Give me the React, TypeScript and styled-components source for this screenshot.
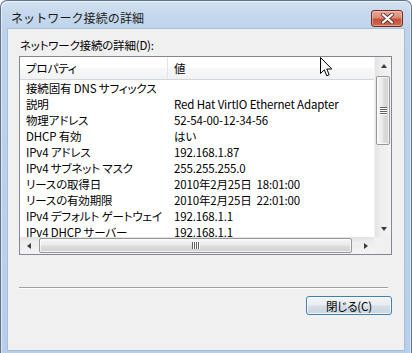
import React from "react";
import styled, { createGlobalStyle } from "styled-components";

const GlobalStyle = createGlobalStyle`
  html, body { margin: 0; padding: 0; background: #ffffff; }
  body { font-family: "Noto Sans CJK JP", "Noto Sans", sans-serif; }
  * { box-sizing: border-box; }
`;

const Window = styled.div`
  position: relative;
  width: 412px;
  height: 353px;
  border: 1px solid #5d7491;
  border-bottom: none;
  border-radius: 7px 7px 0 0;
  background: linear-gradient(180deg, #d3e1f1 0px, #c6d8ed 14px, #bdd3eb 30px, #b7cfea 100%);
  box-shadow: inset 1px 1px 0 rgba(255, 255, 255, 0.55), inset -1px 0 0 rgba(255, 255, 255, 0.45);
  display: flex;
  flex-direction: column;
  overflow: hidden;
`;

const TitleBar = styled.div`
  height: 28px;
  padding: 6px 8px 0 10px;
  display: flex;
  align-items: center;
  justify-content: space-between;
`;

const Title = styled.span`
  font-size: 12px;
  line-height: 16px;
  color: #1b1b1b;
  letter-spacing: 0.1px;
`;

const CloseButton = styled.div`
  width: 32px;
  height: 17px;
  border: 1px solid #6d2b21;
  border-radius: 3px;
  background: linear-gradient(180deg, #e9a899 0%, #dc8a77 45%, #c6503a 55%, #cf6a50 100%);
  box-shadow: inset 0 0 0 1px rgba(255, 220, 210, 0.45);
  display: flex;
  align-items: center;
  justify-content: center;
`;

const Client = styled.div`
  margin: 0 7px;
  height: 321px;
  background: #f0f0f0;
  box-shadow: 0 0 0 1px #a9bdd4;
  padding: 9px 12px 0 11px;
  display: flex;
  flex-direction: column;
`;

const Label = styled.div`
  font-size: 11.5px;
  letter-spacing: -0.2px;
  line-height: 14px;
  height: 14px;
  margin-left: 1px;
  color: #000;
  font-feature-settings: "palt";
`;

const ListBox = styled.div`
  margin-top: 4px;
  width: 373px;
  height: 199px;
  border: 1px solid #828790;
  background: #ffffff;
  display: grid;
  grid-template-columns: 354px 17px;
  grid-template-rows: 180px 17px;
`;

const Content = styled.div`
  overflow: hidden;
  font-size: 11.5px;
  letter-spacing: -0.15px;
  color: #000;
  font-feature-settings: "palt";
`;

const Header = styled.div`
  height: 23px;
  display: grid;
  grid-template-columns: 148px 206px;
  border-bottom: 1px solid #d5d5d5;
  background: linear-gradient(180deg, #ffffff 0%, #ffffff 45%, #f7f8f9 50%, #f1f2f4 100%);
`;

const HeaderCell = styled.div<{ $divider?: boolean }>`
  padding-left: 6px;
  line-height: 22px;
  border-right: ${(p) => (p.$divider ? "1px solid #e1e4e8" : "none")};
`;

const Row = styled.div`
  height: 16px;
  display: grid;
  grid-template-columns: 148px 206px;
  line-height: 16px;
  white-space: pre;
`;

const Cell = styled.div`
  padding-left: 6px;
  overflow: hidden;
`;

const VScroll = styled.div`
  display: flex;
  flex-direction: column;
  background: linear-gradient(90deg, #e2e2e2 0%, #ededed 30%, #f3f3f3 100%);
  border-left: 1px solid #f4f4f4;
`;

const HScroll = styled.div`
  display: flex;
  background: linear-gradient(180deg, #e2e2e2 0%, #ededed 30%, #f3f3f3 100%);
`;

const Corner = styled.div`
  background: #f0f0f0;
`;

const ArrowBox = styled.div`
  width: 17px;
  height: 17px;
  flex: none;
  display: flex;
  align-items: center;
  justify-content: center;
`;

const Tri = styled.span<{ $dir: "up" | "down" | "left" | "right" }>`
  width: 0;
  height: 0;
  border-style: solid;
  ${(p) =>
    p.$dir === "up"
      ? "border-width: 0 3.5px 4px 3.5px; border-color: transparent transparent #3c3c3c transparent;"
      : p.$dir === "down"
      ? "border-width: 4px 3.5px 0 3.5px; border-color: #3c3c3c transparent transparent transparent;"
      : p.$dir === "left"
      ? "border-width: 3.5px 4px 3.5px 0; border-color: transparent #3c3c3c transparent transparent;"
      : "border-width: 3.5px 0 3.5px 4px; border-color: transparent transparent transparent #3c3c3c;"}
`;

const VTrack = styled.div`
  flex: 1;
  padding: 2px 1px 0 1px;
`;

const HTrack = styled.div`
  flex: 1;
  padding: 1px 0 1px 2px;
`;

const VThumb = styled.div<{ $size: number }>`
  height: ${(p) => p.$size}px;
  border: 1px solid #979797;
  border-radius: 2px;
  background: linear-gradient(90deg, #f6f6f6 0%, #eaeaea 45%, #dcdcdc 55%, #d2d2d2 100%);
  box-shadow: inset 0 0 0 1px rgba(255, 255, 255, 0.7);
  display: flex;
  align-items: center;
  justify-content: center;
`;

const HThumb = styled.div<{ $size: number }>`
  width: ${(p) => p.$size}px;
  height: 15px;
  border: 1px solid #979797;
  border-radius: 2px;
  background: linear-gradient(180deg, #f6f6f6 0%, #eaeaea 45%, #dcdcdc 55%, #d2d2d2 100%);
  box-shadow: inset 0 0 0 1px rgba(255, 255, 255, 0.7);
  display: flex;
  align-items: center;
  justify-content: center;
`;

const VGrip = styled.span`
  width: 7px;
  height: 8px;
  background: repeating-linear-gradient(180deg, #5f5f5f 0 1px, #ffffff 1px 2px);
`;

const HGrip = styled.span`
  width: 8px;
  height: 7px;
  background: repeating-linear-gradient(90deg, #5f5f5f 0 1px, #ffffff 1px 2px);
`;

const Separator = styled.div`
  margin-top: 32px;
  width: 369px;
  height: 2px;
  border-top: 1px solid #a0a0a0;
  border-bottom: 1px solid #ffffff;
`;

const ButtonRow = styled.div`
  margin-top: 7px;
  display: flex;
  justify-content: flex-end;
`;

const PushButton = styled.button`
  width: 86px;
  height: 19px;
  padding: 0;
  border: 1px solid #3c7fb1;
  border-radius: 3px;
  background: linear-gradient(180deg, #f1f4f7 0%, #e8edf2 48%, #d6dee7 52%, #cbd5df 100%);
  box-shadow: inset 0 0 0 1px rgba(255, 255, 255, 0.75);
  font-family: "Noto Sans CJK JP", "Noto Sans", sans-serif;
  font-size: 11.5px;
  letter-spacing: -0.15px;
  line-height: 16px;
  color: #000;
  font-feature-settings: "palt";
`;

const Cursor = styled.svg`
  position: absolute;
  left: 319px;
  top: 56px;
`;

const rows: [string, string][] = [
  ["接続固有 DNS サフィックス", ""],
  ["説明", "Red Hat VirtIO Ethernet Adapter"],
  ["物理アドレス", "52-54-00-12-34-56"],
  ["DHCP 有効", "はい"],
  ["IPv4 アドレス", "192.168.1.87"],
  ["IPv4 サブネット マスク", "255.255.255.0"],
  ["リースの取得日", "2010年2月25日  18:01:00"],
  ["リースの有効期限", "2010年2月25日  22:01:00"],
  ["IPv4 デフォルト ゲートウェイ", "192.168.1.1"],
  ["IPv4 DHCP サーバー", "192.168.1.1"],
];

export default function App() {
  return (
    <>
      <GlobalStyle />
      <Window>
        <TitleBar>
          <Title>ネットワーク接続の詳細</Title>
          <CloseButton>
            <svg width="13" height="11" viewBox="0 0 13 11">
              <path
                d="M2 1.5 L6.5 5.5 L11 1.5 M2 9.5 L6.5 5.5 L11 9.5"
                stroke="#5a3a34"
                strokeWidth="4"
                strokeLinecap="round"
                fill="none"
              />
              <path
                d="M2 1.5 L6.5 5.5 L11 1.5 M2 9.5 L6.5 5.5 L11 9.5"
                stroke="#ffffff"
                strokeWidth="2.2"
                strokeLinecap="round"
                fill="none"
              />
            </svg>
          </CloseButton>
        </TitleBar>
        <Client>
          <Label>ネットワーク接続の詳細(D):</Label>
          <ListBox>
            <Content>
              <Header>
                <HeaderCell $divider>プロパティ</HeaderCell>
                <HeaderCell>値</HeaderCell>
              </Header>
              {rows.map(([k, v]) => (
                <Row key={k}>
                  <Cell>{k}</Cell>
                  <Cell>{v}</Cell>
                </Row>
              ))}
            </Content>
            <VScroll>
              <ArrowBox>
                <Tri $dir="up" />
              </ArrowBox>
              <VTrack>
                <VThumb $size={69}>
                  <VGrip />
                </VThumb>
              </VTrack>
              <ArrowBox>
                <Tri $dir="down" />
              </ArrowBox>
            </VScroll>
            <HScroll>
              <ArrowBox>
                <Tri $dir="left" />
              </ArrowBox>
              <HTrack>
                <HThumb $size={313}>
                  <HGrip />
                </HThumb>
              </HTrack>
              <ArrowBox>
                <Tri $dir="right" />
              </ArrowBox>
            </HScroll>
            <Corner />
          </ListBox>
          <Separator />
          <ButtonRow>
            <PushButton>閉じる(C)</PushButton>
          </ButtonRow>
        </Client>
        <Cursor width="13" height="21" viewBox="0 0 13 21">
          <path
            d="M0.5 0.5 L0.5 16.5 L4.3 12.8 L6.8 18.8 L9.2 17.8 L6.8 12 L11.8 12 Z"
            fill="#ffffff"
            stroke="#000000"
            strokeWidth="1"
            strokeLinejoin="round"
          />
        </Cursor>
      </Window>
    </>
  );
}
